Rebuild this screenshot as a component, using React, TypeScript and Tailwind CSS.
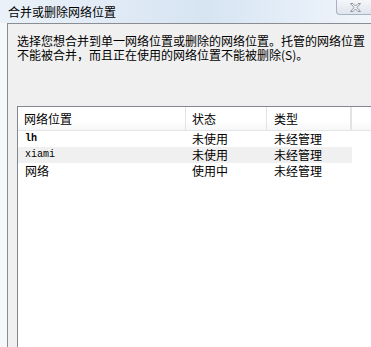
import React from "react";

const cjk = { fontFamily: '"Noto Sans CJK SC", "Noto Sans", sans-serif' };
const mono = { fontFamily: '"Liberation Mono", "DejaVu Sans Mono", monospace' };

type Row = { name: string; mono?: boolean; bold?: boolean; status: string; type: string; hl?: boolean };

const rows: Row[] = [
  { name: "lh", mono: true, bold: true, status: "未使用", type: "未经管理" },
  { name: "xiami", mono: true, status: "未使用", type: "未经管理", hl: true },
  { name: "网络", status: "使用中", type: "未经管理" },
];

export default function App() {
  return (
    <div className="w-[371px] h-[347px] overflow-hidden bg-white flex flex-col relative text-black" style={cjk}>
      {/* title bar */}
      <div className="h-[23px] shrink-0 flex items-center pl-[8px] text-[12px] leading-none bg-[linear-gradient(90deg,#eaf1f9_0%,#dfe9f5_35%,#d6e4f2_55%,#e5eef8_80%,#f1f5fa_100%)]">
        合并或删除网络位置
      </div>
      {/* close button */}
      <div className="absolute right-0 top-0 w-[35px] h-[15px] rounded-bl-[4px] border-l border-b border-[#a7b3c2] bg-[linear-gradient(180deg,#f4f6f9,#dfe5ec)] flex items-center justify-center pl-[2px]">
        <svg width="11" height="9" viewBox="0 0 11 9">
          <path
            d="M0.5 0.5 H3 L5.5 3 L8 0.5 H10.5 L7 4.5 L10.5 8.5 H8 L5.5 6 L3 8.5 H0.5 L4 4.5 Z"
            fill="#eef1f5"
            stroke="#8f98a3"
            strokeWidth="1"
          />
        </svg>
      </div>
      {/* body */}
      <div className="flex-1 flex pl-[7px] bg-[#f5f8fb]">
        <div className="flex-1 flex flex-col border-l border-t border-[#8a8d91] bg-[#f0f0f0] pt-[10px] pl-[9px]">
          <div className="text-[12px] leading-[14px] whitespace-nowrap">
            <div>选择您想合并到单一网络位置或删除的网络位置。托管的网络位置</div>
            <div>不能被合并，而且正在使用的网络位置不能被删除(S)。</div>
          </div>
          {/* list */}
          <div className="mt-[44px] flex-1 border-l border-t border-[#828790] bg-white flex flex-col">
            <div className="h-[24px] flex border-b border-[#e5e5e5] bg-[linear-gradient(180deg,#ffffff_0%,#ffffff_60%,#f6f7f8_100%)] text-[12px]">
              <div className="w-[168px] shrink-0 flex items-center pl-[6px] border-r border-[#e3e3e3]">网络位置</div>
              <div className="w-[81px] shrink-0 flex items-center pl-[6px] border-r border-[#e3e3e3]">状态</div>
              <div className="w-[85px] shrink-0 flex items-center pl-[7px] border-r-2 border-[#e3e3e3]">类型</div>
              <div className="flex-1" />
            </div>
            {rows.map((r) => (
              <div key={r.name} className="h-[16px] flex text-[12px] leading-none">
                <div className={"flex w-[334px] " + (r.hl ? "bg-[#f0f0f0]" : "")}>
                  <div className="w-[168px] shrink-0 flex items-center pl-[7px]">
                    {r.mono ? (
                      <span className={"text-[10px] " + (r.bold ? "font-bold" : "")} style={mono}>
                        {r.name}
                      </span>
                    ) : (
                      <span>{r.name}</span>
                    )}
                  </div>
                  <div className="w-[81px] shrink-0 flex items-center pl-[6px]">{r.status}</div>
                  <div className="w-[85px] shrink-0 flex items-center pl-[7px]">{r.type}</div>
                </div>
              </div>
            ))}
          </div>
        </div>
      </div>
    </div>
  );
}
